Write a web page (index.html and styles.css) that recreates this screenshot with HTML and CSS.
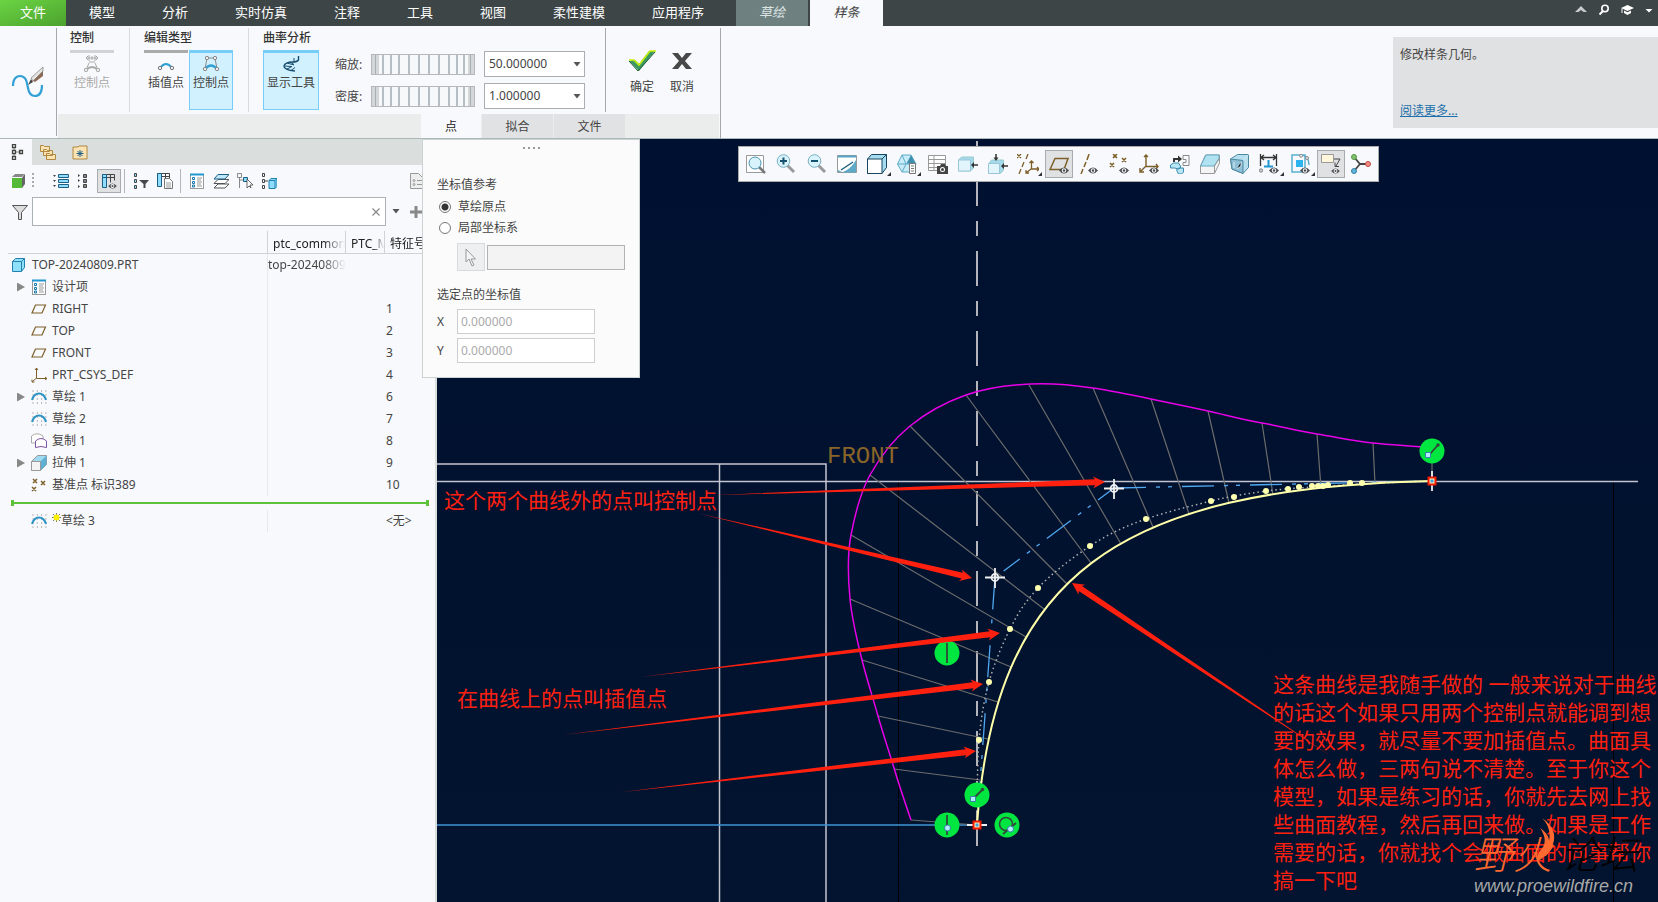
FILE: index.html
```html
<!DOCTYPE html>
<html lang="zh-CN">
<head>
<meta charset="UTF-8">
<title>TOP-20240809.PRT</title>
<link rel="stylesheet" href="styles.css">
</head>
<body>
	<!-- shared shapes -->
	<svg class="defs" width="0" height="0">
		<symbol id="eye" viewBox="0 0 10 7">
			<path d="M0 3.5Q5-2.5 10 3.5Q5 9.500 0 3.500z" fill="#4a4e50"/>
			<circle cx="5" cy="3.500" r="2.200" fill="#fff"/>
			<circle cx="5" cy="3.500" r="1.200" fill="#4a4e50"/>
		</symbol>
		<symbol id="plane" viewBox="0 0 16 16">
			<path d="M4.500 4h10l-3.500 8h-10z" fill="none" stroke="#7d5f2a" stroke-width="1.200"/>
		</symbol>
		<symbol id="sketch" viewBox="0 0 16 16">
			<path d="M1.500 2h14M1.500 6h14M1.500 10h14M1.500 14h14" stroke="#777" stroke-dasharray="1 3.300"/>
			<path d="M1 11Q3 4.500 8 4.500Q13 4.500 15 11" fill="none" stroke="#2c93c4" stroke-width="2"/>
		</symbol>
		<symbol id="items" viewBox="0 0 16 16">
			<rect x="1.500" y="1.500" width="13" height="14" fill="#fff" stroke="#999"/>
			<path d="M1 1.500h14" stroke="#2196cf" stroke-width="2"/>
			<path d="M3.500 4.500h2v2h-2zM3.500 8.500h2v2h-2zM3.500 12h2v2h-2z" fill="none" stroke="#1878ab"/>
			<path d="M8 5h5M8 7h4M8 9h5M8 11h4M8 13h5" stroke="#999"/>
		</symbol>
		<symbol id="corner" viewBox="0 0 4 4">
			<path d="M4 0v4H0z" fill="#333"/>
		</symbol>
	</svg>

	<nav class="menu">
		<button class="menu-tab file">文件</button>
		<button class="menu-tab">模型</button>
		<button class="menu-tab">分析</button>
		<button class="menu-tab">实时仿真</button>
		<button class="menu-tab">注释</button>
		<button class="menu-tab">工具</button>
		<button class="menu-tab">视图</button>
		<button class="menu-tab">柔性建模</button>
		<button class="menu-tab">应用程序</button>
		<button class="menu-tab context">草绘</button>
		<button class="menu-tab context active">样条</button>
		<div class="menu-right">
			<button aria-label="collapse"><svg width="12" height="10" viewBox="0 0 12 10"><path d="M0 7L6 1l6 6H8.500L6 5 3.500 7z" fill="#c8cccc"/></svg></button>
			<button aria-label="search"><svg width="12" height="12" viewBox="0 0 12 12"><circle cx="7" cy="4.500" r="3.200" fill="none" stroke="#fff" stroke-width="1.600"/><path d="M5 7L1.500 10.500" stroke="#fff" stroke-width="2"/></svg></button>
			<button aria-label="learn"><svg width="13" height="12" viewBox="0 0 13 12"><path d="M0 4l6.500-3L13 4 6.500 7zM3 6.500l3.500 1.700L10 6.500V9l-3.500 2L3 9z" fill="#fff"/><path d="M1 4.500V9" stroke="#fff"/></svg></button>
			<button aria-label="more"><svg width="8" height="10" viewBox="0 0 8 10"><path d="M0.500 4h7L4 7.500z" fill="#fff"/></svg></button>
		</div>
	</nav>

	<header class="ribbon">
		<div class="ribbon-tool">
			<svg width="34" height="34" viewBox="0 0 34 34">
				<path d="M2 20C2 12 6 10 9 10C16 10 16 18 17 22C18 28 20 30 24 30C29 30 31 26 31 19" fill="none" stroke="#31a0d4" stroke-width="2.200"/>
				<path d="M17 19l3-6 2 3z" fill="#444"/>
				<path d="M20 12L32 1v4L22 15z" fill="#e4e4e4" stroke="#888" stroke-width=".8"/>
				<path d="M22 15l10-10v5l-8 6z" fill="#8c6a55"/>
			</svg>
		</div>
		<div class="ribbon-body">
			<div class="groups">
				<section class="group first">
					<h2>控制</h2>
					<div class="group-row">
						<button class="tool" disabled>
							<svg width="18" height="18" viewBox="0 0 18 18" fill="none" stroke="#aaa"><path d="M3 3h12M5 1L3 3l2 2M13 1l2 2-2 2M6 0v6M12 0v6M9 1v4M6 7h6M6 8l-3 7M12 8l3 7"/><path d="M3 15q6-6 12 0" stroke-width="2"/><circle cx="3" cy="15" r="1.700" fill="#eee"/><circle cx="15" cy="15" r="1.700" fill="#eee"/></svg>
							控制点
						</button>
					</div>
				</section>
				<section class="group">
					<h2>编辑类型</h2>
					<div class="group-row">
						<button class="tool plain">
							<svg width="18" height="18" viewBox="0 0 18 18"><path d="M3 13q6-8 12 0" fill="none" stroke="#31a0d4" stroke-width="2"/><circle cx="3" cy="13" r="1.700" fill="#eee" stroke="#777"/><circle cx="15" cy="13" r="1.700" fill="#eee" stroke="#777"/></svg>
							插值点
						</button>
						<button class="tool active">
							<svg width="18" height="18" viewBox="0 0 18 18"><path d="M5 3h8l2 11M5 3L3 14" fill="none" stroke="#888"/><path d="M3 14q6-7 12 0" fill="none" stroke="#31a0d4" stroke-width="2.500"/><g fill="#eee" stroke="#888"><circle cx="5" cy="3" r="1.700"/><circle cx="13" cy="3" r="1.700"/><circle cx="3" cy="14" r="1.700"/><circle cx="15" cy="14" r="1.700"/></g></svg>
							控制点
						</button>
					</div>
				</section>
				<section class="group analysis">
					<div>
						<h2>曲率分析</h2>
						<button class="tool wide active">
							<svg width="18" height="18" viewBox="0 0 18 18" fill="none" stroke="#174f70"><path d="M16.500 1v4Q15 7 11 7Q3 7 2 11Q2 15 13 16" stroke-width="1.400"/><path d="M12 7L12 3M8 7l4 2.500M5 8l7 2M2.500 11l7 .5M5 14l5-2.500M9 15.500l4-3"/></svg>
							显示工具
						</button>
					</div>
					<div class="fields">
						<div class="field">
							<label for="zoom">缩放:</label>
							<input type="range" id="zoom" class="wheel">
							<span class="combo"><select aria-label="缩放"><option>50.000000</option></select><svg width="8" height="5" viewBox="0 0 8 5"><path d="M0.500 0h7L4 4.500z" fill="#555"/></svg></span>
						</div>
						<div class="field">
							<label for="density">密度:</label>
							<input type="range" id="density" class="wheel">
							<span class="combo"><select aria-label="密度"><option>1.000000</option></select><svg width="8" height="5" viewBox="0 0 8 5"><path d="M0.500 0h7L4 4.500z" fill="#555"/></svg></span>
						</div>
					</div>
				</section>
				<section class="group confirm">
					<button class="big">
						<svg width="28" height="22" viewBox="0 0 28 22"><path d="M1 11l6-1 4 4L21 1h6L11 21z" fill="#3a9a62"/><path d="M1 10h5l5 5L22 1h6" fill="none" stroke="#c8f000" stroke-width="1.500"/><path d="M1 11l9 10L27 2" fill="none" stroke="#1f5a38"/></svg>
						确定
					</button>
					<button class="big">
						<svg width="28" height="22" viewBox="0 0 28 22"><path d="M4 3h6l4 5 4-5h6l-7 8 7 8h-6l-4-5-4 5H4l7-8z" fill="#484848"/></svg>
						取消
					</button>
				</section>
			</div>
			<div class="subtabs">
				<button class="subtab active">点</button>
				<button class="subtab">拟合</button>
				<button class="subtab">文件</button>
			</div>
		</div>
		<aside class="help">
			<p>修改样条几何。</p>
			<a href="#">阅读更多...</a>
		</aside>
	</header>

	<main class="work">
		<aside class="sidebar">
			<div class="strip">
				<button class="strip-tab active" aria-label="model tree"><svg width="16" height="16" viewBox="-3 0 16 16" fill="none" stroke="#444"><path d="M3 4v2M3 10v2M5 8h5" stroke="#888"/><path d="M1.500.5h3v3h-3zM1.500 6.500h3v3h-3zM1.500 12.500h3v3h-3zM8.500 6.500h3v3h-3z" stroke-width="1.300"/></svg></button>
				<button class="strip-tab" aria-label="folders"><svg width="16" height="16" viewBox="0 0 16 16" fill="#fbe3b4" stroke="#b08840"><path d="M.5 1.500h3l1 1h5v5h-9zM3.500 5.500h3l1 1h5v5h-9zM6.500 9.500h3l1 1h5v5h-9z"/></svg></button>
				<button class="strip-tab" aria-label="favorites"><svg width="16" height="16" viewBox="0 0 16 16"><path d="M1 3h5l1-1h8v13H1z" fill="#fbe3b4" stroke="#b08840"/><path d="M8 6v7M4.500 9.500h7M5.500 7l5 5M10.500 7l-5 5" stroke="#1c5f85"/></svg></button>
			</div>
			<div class="tools">
				<button aria-label="part"><svg width="16" height="16" viewBox="0 0 16 16"><path d="M1 5h10v10H1z" fill="#55b938"/><path d="M1 4l3-3h10l-3 3z" fill="#888"/><path d="M11 5l3-4v10l-3 4z" fill="#666"/></svg></button>
				<span class="grip"></span>
				<button aria-label="expand"><svg width="16" height="16" viewBox="0 0 16 16"><path d="M5.500 1.500h10v3h-10zM5.500 6.500h10v3h-10zM5.500 11.500h10v3h-10z" fill="#8fdcff" stroke="#1c5f85"/><path d="M0 2h3L1.500 4zM0 7h3L1.500 9zM0 12h3l-1.500 2z" fill="#444"/></svg></button>
				<button aria-label="collapse"><svg width="16" height="16" viewBox="0 0 16 16"><path d="M6.500 1.500h3v3h-3zM6.500 6.500h3v3h-3zM6.500 11.500h3v3h-3z" fill="#888" stroke="#444"/><path d="M1 1v3l2-1.500zM1 6v3l2-1.500zM1 12v3l2-1.500z" fill="#444"/></svg></button>
				<button class="on" aria-label="columns"><svg width="16" height="16" viewBox="0 0 16 16"><path d="M1.500 1.500h12v6M1.500 4.500h12M9.500 1.500v8" fill="none" stroke="#444"/><path d="M1.500 1.500h4v13h-4z" fill="#8fdcff" stroke="#1c5f85"/><path d="M1.500 4.500h4" stroke="#1c5f85"/><use href="#eye" x="7" y="10" width="9" height="6"/></svg></button>
				<i class="sep"></i>
				<button aria-label="tree filters"><svg width="16" height="16" viewBox="0 0 16 16"><path d="M1.500.5h2v3h-2zM1.500 6.500h2v3h-2zM1.500 12.500h2v3h-2z" fill="#8fdcff" stroke="#444"/><path d="M6 7h10l-3.500 4v4h-2v-4z" fill="#484848"/></svg></button>
				<button aria-label="tree columns"><svg width="16" height="16" viewBox="0 0 16 16"><path d="M.5.5h12v6M.5 3.500h12M8.500.5v7" fill="none" stroke="#444"/><path d="M.5.5h4v13h-4z" fill="#8fdcff" stroke="#1c5f85"/><path d="M7.500 5.500h5l3 3v7h-8z" fill="#fff" stroke="#777"/><path d="M9 10h5M9 12h5M9 14h5" stroke="#999"/></svg></button>
				<i class="sep"></i>
				<button aria-label="items"><svg width="16" height="16"><use href="#items"/></svg></button>
				<button aria-label="layers"><svg width="16" height="16" viewBox="0 0 16 16" fill="#fff" stroke="#555"><path d="M5 11h11l-4 4H1z"/><path d="M5 6.500h11l-4 4H1z"/><path d="M5 1.500h11l-4 4.500H1z" fill="#bfe9fb" stroke="#1c5f85"/></svg></button>
				<button aria-label="select"><svg width="16" height="16" viewBox="0 0 16 16"><path d="M.5.500h4v4h-4zM2.500 5v10M3 7h4" fill="none" stroke="#888"/><path d="M6.500 4.500h4v4h-4z" fill="#8fdcff" stroke="#1c5f85"/><path d="M10 6l6 6h-3l1 3-2-2-2 2z" fill="#fff" stroke="#444" stroke-width=".8"/></svg></button>
				<button aria-label="model"><svg width="16" height="16" viewBox="0 0 16 16"><path d="M1.500.5h2v3h-2zM1.500 6.500h2v3h-2zM1.500 12.500h2v3h-2zM4 8h3" fill="none" stroke="#444"/><path d="M8 7.500l2-2h6v8l-2 2H8z" fill="#8fdcff" stroke="#2381ad"/><path d="M8 7.500h6v8M14 7.500l2-2" fill="none" stroke="#2381ad"/></svg></button>
				<button class="last" aria-label="page"><svg width="16" height="16" viewBox="0 0 16 16" fill="#eee" stroke="#999"><path d="M.5.500h8l4 4v11H.5z"/><circle cx="4" cy="7.500" r="1"/><circle cx="4" cy="11.500" r="1"/><path d="M7 7.500h5M7 11.500h5"/></svg></button>
			</div>
			<div class="search">
				<svg class="funnel" width="16" height="16" viewBox="0 0 16 16"><path d="M.5 1.500h15l-6 7v7h-3v-7z" fill="#ddd" stroke="#555"/></svg>
				<div class="search-box">
					<input type="text" aria-label="filter">
					<button aria-label="clear"><svg width="8" height="8" viewBox="0 0 8 8"><path d="M.5.5l7 7M7.500.5l-7 7" stroke="#888" stroke-width="1.200"/></svg></button>
				</div>
				<button aria-label="history"><svg width="8" height="5" viewBox="0 0 8 5"><path d="M.5 0h7L4 4.500z" fill="#555"/></svg></button>
				<button aria-label="add"><svg width="12" height="12" viewBox="0 0 12 12"><path d="M6 0v12M0 6h12" stroke="#888" stroke-width="3"/></svg></button>
			</div>

			<table class="tree">
				<thead>
					<tr><th></th><th><span>ptc_common_name</span></th><th><span>PTC_MATERIAL</span></th><th><span>特征号</span></th></tr>
				</thead>
				<tbody>
					<tr class="root"><td><div><svg width="16" height="16" viewBox="0 0 16 16"><path d="M1.500 4.500l3-3h9v9l-3 4h-9z" fill="#8fe0fb" stroke="#2381ad"/><path d="M1.500 4.500h9v10M10.500 4.500l3-3" fill="none" stroke="#2381ad"/></svg>TOP-20240809.PRT</div></td><td><span>top-20240809</span></td><td></td><td></td></tr>
					<tr><td><div><button class="arrow" aria-label="expand"></button><svg width="16" height="16"><use href="#items"/></svg>设计项</div></td><td></td><td></td><td></td></tr>
					<tr><td><div><svg width="16" height="16"><use href="#plane"/></svg>RIGHT</div></td><td></td><td></td><td>1</td></tr>
					<tr><td><div><svg width="16" height="16"><use href="#plane"/></svg>TOP</div></td><td></td><td></td><td>2</td></tr>
					<tr><td><div><svg width="16" height="16"><use href="#plane"/></svg>FRONT</div></td><td></td><td></td><td>3</td></tr>
					<tr><td><div><svg width="16" height="16" viewBox="0 0 16 16"><path d="M5.500 1v10.500H16M5.500 11L1 15M4 3l1.500-2L7 3M14 10l2 1.500-2 1.500M1 12.500V15h2.500" fill="none" stroke="#7d5f2a"/></svg>PRT_CSYS_DEF</div></td><td></td><td></td><td>4</td></tr>
					<tr><td><div><button class="arrow" aria-label="expand"></button><svg width="16" height="16"><use href="#sketch"/></svg>草绘 1</div></td><td></td><td></td><td>6</td></tr>
					<tr><td><div><svg width="16" height="16"><use href="#sketch"/></svg>草绘 2</div></td><td></td><td></td><td>7</td></tr>
					<tr><td><div><svg width="16" height="16" viewBox="0 0 16 16" fill="#fff"><path d="M.5 10V3Q6-1.500 12 3v4" stroke="#aaa"/><path d="M.5 10h4" stroke="#aaa"/><path d="M4.500 14.500V8Q10 3 15.500 8v6.500Q10 12.500 4.500 14.500z" stroke="#7c55a0"/></svg>复制 1</div></td><td></td><td></td><td>8</td></tr>
					<tr><td><div><button class="arrow" aria-label="expand"></button><svg width="16" height="16" viewBox="0 0 16 16"><path d="M.5 6.500l6-6h9v9l-6 6h-9z" fill="#9fdaf0" stroke="#999"/><path d="M9.500 6.500l6-6v9l-6 6z" fill="#5fb0d2"/><path d="M.5 6.500h9v9h-9z" fill="#f4f4f4" stroke="#999"/></svg>拉伸 1</div></td><td></td><td></td><td>9</td></tr>
					<tr><td><div><svg width="16" height="16" viewBox="0 0 16 16"><path d="M2 2l4 4M6 2L2 6M10 4l4 4M14 4l-4 4M1 10l4 4M5 10l-4 4" stroke="#7d5f2a" stroke-width="1.500"/></svg>基准点 标识389</div></td><td></td><td></td><td>10</td></tr>
					<tr class="insert"><td colspan="4"><div></div></td></tr>
					<tr><td><div><svg width="16" height="16"><use href="#sketch"/></svg><svg class="star" width="9" height="16" viewBox="0 0 9 16"><path d="M4.500 0v9M0 4.500h9M1 1l7 7M8 1L1 8" stroke="#777"/><circle cx="4.500" cy="4.500" r="3" fill="#fff200"/></svg>草绘 3</div></td><td></td><td></td><td>&lt;无&gt;</td></tr>
				</tbody>
			</table>
		</aside>

		<section class="canvas">
			<svg class="drawing" viewBox="437 139 1221 763" preserveAspectRatio="xMinYMin meet" fill="none">
				<!-- datum and reference edges -->
				<path d="M898.500 482V902M1613.500 482V902" stroke="#000"/>
				<path d="M437 464H826V902M719.500 464V902M437 481.500H1638" stroke="#c4c4d0" stroke-width="1.500"/>
				<path d="M437 825H977" stroke="#3f96d6" stroke-width="1.500"/>
				<path d="M977 141V847" stroke="#b4b4bc" stroke-width="2" stroke-dasharray="15 15 35 15"/>

				<!-- curvature comb -->
				<path d="M911 820L977 825M894 769L980 780M878 716L988 739M862 660L998 702M850 599L1011 667M851 535L1026 637M870 475L1044 609M910 426L1067 584M966 395L1091 563M1029 385L1121 544M1093 388L1153 527M1151 399L1189 514M1208 411L1229 503M1262 423L1273 495M1317 434L1321 488M1373 443L1375 484M1432 448V481" stroke="#6c6c6c" stroke-width="1.200"/>
				<path d="M911 820S899 785 894 768S883 734 878 716S867 680 862 660S852 620 850 599S847 556 851 535S860 493 870 475S894 439 910 426S946 402 966 395S1009 385 1030 384S1073 385 1093 388S1132 395 1151 399S1190 407 1208 411S1244 420 1262 423S1298 431 1317 434S1354 441 1373 443S1412 446 1432 448" stroke="#e800e8" stroke-width="1.500"/>

				<!-- control polygon -->
				<path d="M1114 488L995 577.500" stroke="#4fa8f0" stroke-width="1.300" stroke-dasharray="20 9 4 8 4 9 30 9 4 8 4 9"/>
				<path d="M995 577.500L977 825M1114 488L1432 481" stroke="#4fa8f0" stroke-width="1.300" stroke-dasharray="32 10 4 8 4 10"/>

				<!-- spline -->
				<path d="M977 825S977 762 979 740S984 700 989 682S1002 645 1010 629S1025 602 1038 588S1072 558 1090 546S1126 526 1146 519S1191 506 1211 501S1246 494 1266 491S1390 482 1432 481" stroke="#b0b0b0" stroke-width="1.500" stroke-dasharray="1.500 3"/>
				<path d="M977 825C995 577 1114 488 1432 481" stroke="#ffffa8" stroke-width="2"/>
				<g fill="#ffffb0">
					<circle cx="979" cy="740" r="3"/><circle cx="989" cy="682" r="3"/><circle cx="1010" cy="629" r="3"/><circle cx="1038" cy="588" r="3"/>
					<circle cx="1090" cy="546" r="3"/><circle cx="1146" cy="519" r="3"/><circle cx="1211" cy="501" r="3"/><circle cx="1234" cy="497" r="3"/>
					<circle cx="1266" cy="491" r="3"/><circle cx="1288" cy="489" r="3"/><circle cx="1299" cy="487" r="3"/><circle cx="1312" cy="486" r="3"/>
					<circle cx="1318" cy="486" r="3"/><circle cx="1323" cy="486" r="3"/><circle cx="1328" cy="485" r="3"/><circle cx="1350" cy="483" r="3"/><circle cx="1362" cy="483" r="3"/>
				</g>
				<g stroke="#f0f0f0" stroke-width="1.800">
					<path d="M985 577.500h20M995 568v20M1104 488.500h20M1114 479v20"/>
					<circle cx="995" cy="577.500" r="3.500"/><circle cx="1114" cy="488.500" r="3.500"/>
					<path d="M967 825h20M1432 471v20"/>
				</g>
				<g fill="#fff0b0" stroke="#f01800" stroke-width="2">
					<path d="M973.500 821.500h7v7h-7zM1428.500 477.500h7v7h-7z"/>
				</g>
				<path d="M975.500 825h3M1430.500 481h3" stroke="#3fa0e0" stroke-width="3"/>

				<!-- constraint marks -->
				<g fill="#00e640">
					<circle cx="1432" cy="451" r="12.500"/><circle cx="947" cy="653" r="12.500"/><circle cx="977" cy="795" r="12.500"/>
					<circle cx="947" cy="825" r="12.500"/><circle cx="1007" cy="825" r="12.500"/>
				</g>
				<g stroke="#33473a" stroke-width="1.800">
					<path d="M1430 454l8-9M975 797l8-8M947 643v20M947 815v20M1003 834l13-11"/>
					<circle cx="1006" cy="824" r="6.500" stroke-width="1.500"/>
				</g>
				<circle cx="1438" cy="445" r="1.800" fill="#33473a"/><circle cx="982.500" cy="789.500" r="1.800" fill="#33473a"/>
				<g fill="#b4ecff" stroke="#3680a8">
					<path d="M1425.500 452.500h5v5h-5zM970.500 796.500h5v5h-5z"/>
					<circle cx="947.500" cy="828" r="3"/><circle cx="1010.500" cy="829" r="3"/>
				</g>
				<text class="datum" x="827" y="463">FRONT</text>

				<!-- arrows -->
				<g fill="#ff2010">
					<path transform="translate(1105 482) rotate(-1.920)" d="M0 0L-12-6L-10-3L-394 0L-10 3L-12 6z"/>
					<path transform="translate(972 578) rotate(13.300)" d="M0 0L-12-6L-10-3L-282 0L-10 3L-12 6z"/>
					<path transform="translate(1072 583) rotate(213.800)" d="M0 0L-12-6L-10-3L-312 0L-10 3L-12 6z"/>
					<path transform="translate(1000 633) rotate(-7)" d="M0 0L-12-6L-10-3L-362 0L-10 3L-12 6z"/>
					<path transform="translate(983 684) rotate(-6.900)" d="M0 0L-12-6L-10-3L-424 0L-10 3L-12 6z"/>
					<path transform="translate(976 751) rotate(-6.600)" d="M0 0L-12-6L-10-3L-358 0L-10 3L-12 6z"/>
				</g>
			</svg>

			<p class="note note-control">这个两个曲线外的点叫控制点</p>
			<p class="note note-interp">在曲线上的点叫插值点</p>
			<p class="note note-long">这条曲线是我随手做的 一般来说对于曲线<br>的话这个如果只用两个控制点就能调到想<br>要的效果，就尽量不要加插值点。曲面具<br>体怎么做，三两句说不清楚。至于你这个<br>模型，如果是练习的话，你就先去网上找<br>些曲面教程，然后再回来做。如果是工作<br>需要的话，你就找个会做曲面的同事帮你<br>搞一下吧</p>

			<div class="watermark">
				<div class="wm-name"><span class="wm-fire">野火</span><span>论坛</span></div>
				<div class="wm-url">www.proewildfire.cn</div>
				<svg class="flame" width="20" height="44" viewBox="0 0 20 44"><path d="M6 0C18 8 20 18 17 26C15 34 10 38 2 43C0 38 3 34 7 29C10 24 9 17 4 10C11 15 13 19 13 23C15 14 12 6 6 0z" fill="#ff6a30"/></svg>
			</div>

			<div class="viewbar" role="toolbar">
				<button aria-label="refit"><svg width="20" height="20" viewBox="0 0 20 20"><path d="M.5 1.500h17v17H.5z" fill="#fff" stroke="#999"/><path d="M13 13l6 6" stroke="#777" stroke-width="2.500"/><circle cx="9" cy="9" r="6" fill="#d8f3fc" stroke="#4c95b5"/></svg></button>
				<button aria-label="zoom in"><svg width="20" height="20" viewBox="0 0 20 20"><path d="M11 11l7 7" stroke="#999" stroke-width="3"/><circle cx="7.500" cy="7" r="6.300" fill="#d8f3fc" stroke="#7ab0c6"/><path d="M4 7h7M7.500 3.500v7" stroke="#14506f" stroke-width="2"/></svg></button>
				<button aria-label="zoom out"><svg width="20" height="20" viewBox="0 0 20 20"><path d="M11 11l7 7" stroke="#999" stroke-width="3"/><circle cx="7.500" cy="7" r="6.300" fill="#d8f3fc" stroke="#7ab0c6"/><path d="M4 7h7" stroke="#14506f" stroke-width="2"/></svg></button>
				<button aria-label="repaint"><svg width="20" height="20" viewBox="0 0 20 20"><path d="M.5 1.500h19v17H.5z" fill="#fff" stroke="#999"/><path d="M19 6v12.500H5Q14 15 19 6z" fill="#5da9c6"/><path d="M1 18V16L5 18z" fill="#5da9c6"/><path d="M1 2.500h18" stroke="#57a4c4" stroke-width="2"/><path d="M4 16L16 8" stroke="#23627f" stroke-width="1.500"/></svg></button>
				<button aria-label="shading"><svg width="20" height="20" viewBox="0 0 20 20"><path d="M.5 5l4-4.500h15v13l-4.500 6H.500z" fill="#a5dcf0" stroke="#18455f"/><path d="M.5 5h14.500v14.500H.5z" fill="#fff" stroke="#18455f"/><path d="M15 5l4.500-4.500" stroke="#18455f"/></svg><svg class="corner" width="4" height="4"><use href="#corner"/></svg></button>
				<button aria-label="saved views"><svg width="20" height="20" viewBox="0 0 20 20"><path d="M.5 10l4.500-9h9l5 9-5 8H5z" fill="#c8ecf8" stroke="#5fabc8"/><path d="M.5 10h18M5 1l4 9-4 8" fill="none" stroke="#5fabc8"/><path d="M9.500 9.500L14 1l4.500 8.500z" fill="#3f8eb0"/><path d="M12.500 9.500h6v10h-6z" fill="#fff" stroke="#777"/><path d="M14 12h3M14 14.500h3M14 17h3" stroke="#777"/></svg><svg class="corner" width="4" height="4"><use href="#corner"/></svg></button>
				<button aria-label="view manager"><svg width="20" height="20" viewBox="0 0 20 20"><path d="M.5 1.500h17v15H.5zM.5 5.500h17M.5 9.500h17M.5 13.500h17M6 2v14" fill="#fff" stroke="#999"/><path d="M9 12h3l1-2h4l1 2h2v8H9z" fill="#444"/><circle cx="14.500" cy="15.500" r="2.500" fill="#fff"/><circle cx="14.500" cy="15.500" r="1.500" fill="#444"/></svg></button>
				<button aria-label="section"><svg width="20" height="20" viewBox="0 0 20 20"><path d="M.5 6l3-3h12v11l-3 3H.500z" fill="#a5d9ec" stroke="#9cc"/><path d="M.5 6h12v11H.5z" fill="#e2f5fc" stroke="#9ac7d8"/><path d="M20 11h-5" stroke="#333" stroke-width="1.500"/><path d="M16 8l-3 3 3 3z" fill="#333"/></svg></button>
				<button aria-label="section end"><svg width="20" height="20" viewBox="0 0 20 20"><path d="M.5 10l3-4h12v10l-3 3.500H.500z" fill="#a5d9ec" stroke="#9cc"/><path d="M.5 9.500h11v10H.5z" fill="#e2f5fc" stroke="#9ac7d8"/><path d="M20 12h-5M8 0v4" stroke="#333" stroke-width="1.500"/><path d="M16 9l-3 3 3 3zM5.500 3.500h5L8 7z" fill="#333"/></svg></button>
				<button aria-label="datum display"><svg width="22" height="20" viewBox="0 0 22 20"><path d="M0 0l4 4M4 0L0 4M11 0L9 5M7 8l-2 5M4 15l-2 5M14.500 7v8H22M14 15l-5 4M12.500 9l2-2 2 2M20 13l2 2-2 2M9 16v3h3" fill="none" stroke="#7d5f2a" stroke-width="1.300"/></svg><svg class="corner" width="4" height="4"><use href="#corner"/></svg></button>
				<button class="on" aria-label="planes"><svg width="20" height="20" viewBox="0 0 20 20"><path d="M6 4.500h13l-4 11H1z" fill="none" stroke="#7d5f2a" stroke-width="1.500"/><use href="#eye" x="10" y="13" width="10" height="7"/></svg></button>
				<button aria-label="axes"><svg width="20" height="20" viewBox="0 0 20 20"><path d="M10 0L8 6M7 8l-2 5M4 15l-2 5" stroke="#7d5f2a" stroke-width="1.500"/><use href="#eye" x="9" y="13" width="10" height="7"/></svg></button>
				<button aria-label="points"><svg width="20" height="20" viewBox="0 0 20 20"><path d="M4 0l4 4M8 0L4 4M13 4l4 4M17 4l-4 4M1 9l4 4M5 9l-4 4" stroke="#7d5f2a" stroke-width="1.600"/><use href="#eye" x="10" y="13" width="10" height="7"/></svg></button>
				<button aria-label="coordinate systems"><svg width="20" height="20" viewBox="0 0 20 20"><path d="M7 1v11.500h12M7 12l-6 6M5 3l2-2 2 2M17 10l2 2.500-2 2.500M1 14v4h4" fill="none" stroke="#7d5f2a" stroke-width="1.400"/><use href="#eye" x="10" y="13" width="10" height="7"/></svg></button>
				<button aria-label="exploded"><svg width="20" height="20" viewBox="0 0 20 20"><path d="M13 1.500h6v10h-6v-3h3v-3h-3z" fill="none" stroke="#888"/><path d="M4 8V5h5" fill="none" stroke="#333" stroke-width="2"/><path d="M8 1.500L12 5l-4 3.500z" fill="#333"/><path d="M.5 11l3-2h5l2 3v2l-2 1-4-1h-4zM6.500 16l2-2h5v4l-2 2h-3z" fill="#b8e6f5" stroke="#3a8bac"/></svg></button>
				<button aria-label="ghost"><svg width="20" height="20" viewBox="0 0 20 20"><path d="M.5 12l5-11h14v8l-5 10.500H.500z" fill="#f4f4f4" stroke="#999"/><path d="M1 11L6 1h13v4l-5 7H1z" fill="#b0e2f2" stroke="#62a9c4"/><path d="M14.500 12v7M14.500 12l5-8" stroke="#999"/></svg></button>
				<button aria-label="perspective"><svg width="20" height="20" viewBox="0 0 20 20"><path d="M.5 5l7-4.500h11v13L13 19.500 2 15z" fill="#b5dfef" stroke="#4c87a0"/><path d="M.5 5l12.500 1.500V19.500L2 15z" fill="#8ebfd4" stroke="#4c87a0"/><path d="M13.500 6.500l5-6M4 14V8M7 15l4-3V8" stroke="#d5edf6"/></svg></button>
				<button aria-label="dimensions"><svg width="22" height="20" viewBox="0 0 22 20"><path d="M1.500 0v12M17.500 0v12M2 3.500h15M5 1L2 3.500 5 6M14 1l3 2.500L14 6" fill="none" stroke="#333" stroke-width="1.300"/><path d="M9.500 6v6M5 12.500h9" stroke="#2196cf" stroke-width="2"/><circle cx="2" cy="16.500" r="1.700" fill="#ccc" stroke="#888"/><use href="#eye" x="10" y="13" width="10" height="7"/></svg><svg class="corner" width="4" height="4"><use href="#corner"/></svg></button>
				<button aria-label="annotations"><svg width="20" height="20" viewBox="0 0 20 20"><path d="M1 1h13v17H1zM9 1q9 0 9 10" fill="none" stroke="#58aed0" stroke-width="1.500"/><path d="M5 6h7v7H5z" fill="#2db3ee"/><circle cx="10" cy="1.700" r="1.500" fill="#eee" stroke="#888"/><circle cx="16" cy="4" r="1.500" fill="#eee" stroke="#888"/><use href="#eye" x="9" y="13" width="10" height="7"/></svg><svg class="corner" width="4" height="4"><use href="#corner"/></svg></button>
				<button class="on" aria-label="annotation display"><svg width="20" height="20" viewBox="0 0 20 20"><path d="M.5 .5h12v8H.5z" fill="#fff6dc" stroke="#999"/><path d="M13 5h6l-4 7M14 8.500v4h4" fill="none" stroke="#444"/><use href="#eye" x="10" y="14" width="9" height="6"/></svg></button>
				<button aria-label="spin center"><svg width="20" height="20" viewBox="0 0 20 20"><path d="M3 3l6 7h8M9 10l-6 7" fill="none" stroke="#444" stroke-width="1.800"/><circle cx="3" cy="3" r="2.500" fill="#7ec46a" stroke="#579446"/><circle cx="17" cy="10" r="2.500" fill="#f28d86" stroke="#c24a42"/><circle cx="3" cy="17" r="2.500" fill="#60b4dc" stroke="#3581a5"/></svg></button>
			</div>
		</section>

		<form class="popup">
			<div class="dots"></div>
			<fieldset>
				<legend>坐标值参考</legend>
				<label class="radio"><input type="radio" name="origin" checked>草绘原点</label>
				<label class="radio"><input type="radio" name="origin">局部坐标系</label>
				<div class="pick">
					<button type="button" disabled aria-label="pick"><svg width="12" height="19" viewBox="0 0 12 19"><path d="M1 1v13l3-3 3 7 2-1-3-6h4.500z" fill="#f4f4f4" stroke="#999"/></svg></button>
					<input type="text" disabled aria-label="局部坐标系">
				</div>
			</fieldset>
			<fieldset class="coords">
				<legend>选定点的坐标值</legend>
				<div class="coord"><label for="px">X</label><input type="text" id="px" value="0.000000" disabled></div>
				<div class="coord"><label for="py">Y</label><input type="text" id="py" value="0.000000" disabled></div>
			</fieldset>
		</form>
	</main>
</body>
</html>
```
FILE: styles.css
```css
* {
	margin: 0;
	padding: 0;
	box-sizing: border-box;
}

body {
	display: flex;
	flex-direction: column;
	min-height: 100vh;
	overflow: hidden;
	font-family: "Noto Sans", "Noto Sans CJK SC", sans-serif;
	font-size: 12px;
	line-height: 16px;
	color: #444;
	background-color: #f8f9fc;
}

button, input, select {
	font: inherit;
	color: inherit;
	border: none;
	background: none;
}

svg {
	display: block;
	flex: none;
}

.defs {
	position: absolute;
}

/* menu */
.menu {
	display: flex;
	height: 26px;
	background-color: #3e4546;
}

.menu-tab {
	padding: 0 24px 2px 23px;
	font-size: 13px;
	color: #fff;
}

.menu-tab.file {
	width: 66px;
	padding: 0 0 2px;
	background: linear-gradient(160deg, #6bd443, #4ca22e);
}

.menu-tab.context {
	width: 72px;
	margin-left: 8px;
	padding: 0 0 2px;
	font-style: italic;
	color: #dce4e4;
	background-color: #6f8080;
}

.menu-tab.context.active {
	width: 73px;
	margin-left: 2px;
	color: #444;
	background-color: #f8f9fc;
}

.menu-right {
	display: flex;
	align-items: center;
	gap: 11px;
	margin-left: auto;
	padding: 0 5px 6px;
}

/* ribbon */
.ribbon {
	display: flex;
	height: 113px;
	border-bottom: 1px solid #aab8b8;
}

.ribbon-tool {
	display: flex;
	align-items: center;
	justify-content: center;
	width: 57px;
	margin: 2px 0;
	padding-top: 2px;
	border-right: 1px solid #a5a8aa;
}

.ribbon-body {
	display: flex;
	flex-direction: column;
	justify-content: space-between;
	margin: 2px 0 0;
	border-right: 1px solid #a5a8aa;
}

.groups {
	display: flex;
	height: 84px;
}

.group {
	padding: 2px 15px 0 14px;
	border-right: 1px solid #d8dadc;
}

.group.first {
	padding-left: 13px;
}

.group h2 {
	height: 20px;
	font-size: 12px;
	line-height: 16px;
	font-weight: 500;
	color: #333;
}

.group-row {
	display: flex;
	gap: 1px;
}

.tool {
	display: flex;
	flex-direction: column;
	align-items: center;
	gap: 2px;
	width: 44px;
	height: 60px;
	padding-top: 2px;
	white-space: nowrap;
	border-top: 3px solid #d2d3d4;
}

.tool:disabled {
	color: #aaa;
}

.tool.plain {
	border-top-color: #aaa;
}

.tool.active {
	border: 1px solid #76cdf8;
	border-top-width: 3px;
	background-color: #d2f1fe;
}

.tool.wide {
	width: 56px;
}

.analysis {
	display: flex;
	gap: 16px;
	padding-right: 20px;
	border-right-color: #a5a8aa;
}

.fields {
	display: flex;
	flex-direction: column;
	gap: 6px;
	padding-top: 21px;
}

.field {
	display: flex;
	align-items: center;
	height: 26px;
}

.field label {
	width: 36px;
	padding-top: 2px;
}

.wheel {
	appearance: none;
	width: 104px;
	height: 21px;
	margin-right: 9px;
	border: 1px solid #b4b8ba;
	background: linear-gradient(90deg, #d4d6d8 0 3px, #a8b0b4 3px 4px, #d4d6d8 4px 7px, #f6f8fa 7px 10px, #b4bec4 10px 12px, #f6f8fa 12px 18px, #b4bec4 18px 20px, #f6f8fa 20px 26px, #b4bec4 26px 28px, #f6f8fa 28px 36px, #b4bec4 36px 38px, #f6f8fa 38px 46px, #b4bec4 46px 48px, #f6f8fa 48px 56px, #b4bec4 56px 58px, #f6f8fa 58px 66px, #b4bec4 66px 68px, #f6f8fa 68px 76px, #b4bec4 76px 78px, #f6f8fa 78px 84px, #b4bec4 84px 86px, #f6f8fa 86px 91px, #b4bec4 91px 93px, #f6f8fa 93px 96px, #d4d6d8 96px 98px, #a8b0b4 98px 99px, #d4d6d8 99px);
}

.wheel::-webkit-slider-thumb {
	appearance: none;
	width: 2px;
	height: 1px;
}

.combo {
	position: relative;
}

.combo select {
	display: block;
	appearance: none;
	width: 101px;
	height: 26px;
	padding-left: 4px;
	border: 1px solid #aaaeb0;
	background-color: #fff;
}

.combo svg {
	position: absolute;
	right: 4px;
	top: 11px;
	pointer-events: none;
}

.confirm {
	display: flex;
	padding: 22px 18px 0 16px;
	border: none;
}

.big {
	display: flex;
	flex-direction: column;
	align-items: center;
	gap: 7px;
	width: 40px;
	height: 48px;
}

.subtabs {
	display: flex;
	gap: 1px;
	height: 24px;
	margin: 0 1px;
	padding-left: 363px;
	background-color: #ebecec;
}

.subtab {
	width: 71px;
	padding-top: 2px;
	background-color: #e1e2e3;
}

.subtab.active {
	width: 60px;
	color: #222;
	background-color: #f8f9fc;
}

.help {
	display: flex;
	flex-direction: column;
	justify-content: space-between;
	width: 265px;
	height: 91px;
	margin: 11px 0 0 auto;
	padding: 10px 7px 9px;
	background-color: #e0e1e2;
}

.help a {
	color: #1c6fab;
}

/* model tree */
.work {
	position: relative;
	display: flex;
	flex: 1;
}

.sidebar {
	width: 437px;
	border-right: 2px solid #dadfde;
	background-color: #f8f9fc;
}

.strip {
	display: flex;
	height: 26px;
	background-color: #dadfde;
}

.strip-tab {
	display: flex;
	align-items: center;
	justify-content: center;
	width: 32px;
}

.strip-tab.active {
	background-color: #f8f9fc;
}

.tools {
	display: flex;
	align-items: center;
	height: 32px;
	padding: 0 5px 0 7px;
}

.tools button {
	display: flex;
	align-items: center;
	justify-content: center;
	width: 24px;
	height: 24px;
}

.tools .on {
	border: 1px solid #a8acae;
	background-color: #e0e1e3;
}

.tools .last {
	margin-left: auto;
}

.grip {
	width: 2px;
	height: 16px;
	margin: 0 15px 0 1px;
	background: repeating-linear-gradient(#aaa 0 2px, transparent 2px 4px);
}

.sep {
	width: 1px;
	height: 24px;
	margin: 0 4px 0 3px;
	background-color: #b4b8ba;
}

.search {
	display: flex;
	align-items: center;
	gap: 5px;
	height: 29px;
	margin-bottom: 5px;
	padding-left: 12px;
}

.funnel {
	margin-right: -1px;
}

.search-box {
	display: flex;
	align-items: center;
	width: 354px;
	height: 29px;
	margin-right: 1px;
	border: 1px solid #aab2b6;
	background-color: #fff;
}

.search-box input {
	flex: 1;
	height: 27px;
}

.search-box button {
	width: 13px;
}

.search > button {
	margin-right: 5px;
}

.tree {
	width: 427px;
	margin-left: 8px;
	table-layout: fixed;
	border-collapse: separate;
	border-spacing: 0;
}

.tree th {
	height: 23px;
	padding: 4px 0 0 5px;
	font-weight: normal;
	text-align: left;
	color: #222;
	border-right: 1px solid #d0d2d4;
	border-bottom: 1px solid #d0d2d4;
}

.tree th:nth-child(1) {
	width: 260px;
}

.tree th:nth-child(2) {
	width: 78px;
}

.tree th:nth-child(3) {
	width: 39px;
}

.tree td {
	height: 22px;
}

.tree td:first-child {
	border-right: 1px solid #e6e8ec;
}

.tree td:last-child {
	padding-left: 1px;
}

.tree td span, .tree th span {
	display: block;
	overflow: hidden;
	white-space: nowrap;
	mask-image: linear-gradient(90deg, #000 70%, transparent);
}

.tree td:first-child div {
	position: relative;
	display: flex;
	align-items: center;
	gap: 5px;
	padding-left: 23px;
}

.tree .root td:first-child div {
	padding-left: 3px;
}

.tree .arrow {
	position: absolute;
	left: 9px;
	width: 8px;
	height: 9px;
	background-color: #888;
	clip-path: polygon(0 0, 100% 50%, 0 100%);
}

.tree .star {
	margin-right: -5px;
}

.tree .insert td {
	height: 14px;
	padding: 0;
	border: none;
}

.tree .insert td div {
	height: 2px;
	margin: 0 6px 0 3px;
	padding: 0;
	background-color: #5cc23a;
}

.tree .insert td div::before, .tree .insert td div::after {
	content: "";
	position: absolute;
	left: 0;
	width: 3px;
	height: 6px;
	background-color: #5cc23a;
}

.tree .insert td div::after {
	left: auto;
	right: 0;
}

/* graphics window */
.canvas {
	position: relative;
	flex: 1;
	overflow: hidden;
	background: linear-gradient(#001030, #02142f);
}

.drawing {
	width: 100%;
	height: 100%;
}

.datum {
	font-family: "Liberation Mono", monospace;
	font-size: 24px;
	fill: #8a6528;
}

.note {
	position: absolute;
	font-size: 21px;
	line-height: 28px;
	white-space: nowrap;
	color: #ff2010;
}

.note-control {
	left: 7px;
	top: 347px;
}

.note-interp {
	left: 20px;
	top: 545px;
}

.note-long {
	right: 0;
	top: 531px;
	width: 385px;
}

.watermark {
	position: absolute;
	right: 18px;
	bottom: 6px;
	width: 166px;
	font-style: italic;
	white-space: nowrap;
}

.wm-name {
	display: flex;
	gap: 8px;
	font-size: 39px;
	line-height: 44px;
	font-weight: 300;
	color: #000;
}

.wm-fire {
	color: #ff6a30;
}

.wm-url {
	font-family: "Liberation Sans", sans-serif;
	font-size: 18px;
	line-height: 20px;
	color: #a8a8a8;
}

.flame {
	position: absolute;
	left: 62px;
	top: -14px;
}

.viewbar {
	position: absolute;
	left: 301px;
	top: 7px;
	display: flex;
	justify-content: space-between;
	width: 641px;
	height: 36px;
	padding: 3px;
	border: 1px solid #aaa;
	background-color: #f8f9fc;
}

.viewbar button {
	position: relative;
	display: flex;
	align-items: center;
	justify-content: center;
	width: 28px;
	height: 28px;
}

.viewbar .on {
	border: 1px solid #a8acae;
	background-color: #e0e1e3;
}

.corner {
	position: absolute;
	right: 0;
	bottom: 2px;
}

/* point panel */
.popup {
	position: absolute;
	left: 422px;
	top: 0;
	width: 218px;
	height: 239px;
	padding: 7px 14px;
	border: 1px solid #ccd2d2;
	background-color: #fbfbfb;
}

.dots {
	width: 17px;
	height: 2px;
	margin: 0 auto 28px;
	background: repeating-linear-gradient(90deg, #999 0 2px, transparent 2px 5px);
}

.popup fieldset {
	border: none;
	margin-bottom: 16px;
}

.popup legend {
	margin-bottom: 3px;
}

.coords legend {
	margin-bottom: 6px;
}

.radio {
	display: flex;
	align-items: center;
	gap: 7px;
	height: 21px;
	padding-left: 2px;
}

.radio input {
	appearance: none;
	width: 12px;
	height: 12px;
	border: 1px solid #777;
	border-radius: 50%;
	background-color: #fff;
}

.radio input:checked {
	background: radial-gradient(#333 0 3px, #fff 4px);
}

.pick {
	display: flex;
	align-items: center;
	gap: 2px;
	margin: 5px 0 0 20px;
}

.pick button {
	display: flex;
	align-items: center;
	justify-content: center;
	width: 28px;
	height: 28px;
	border: 1px solid #d8dadc;
	background-color: #eeeff1;
}

.pick input {
	width: 138px;
	height: 25px;
	border: 1px solid #b0b2b4;
	background-color: #f3f3f3;
}

.coord {
	display: flex;
	align-items: center;
	height: 25px;
	margin-bottom: 4px;
}

.coord label {
	width: 20px;
}

.coord input {
	width: 138px;
	height: 25px;
	padding-left: 3px;
	color: #aaa;
	border: 1px solid #ccced0;
	background-color: #fff;
}
```
